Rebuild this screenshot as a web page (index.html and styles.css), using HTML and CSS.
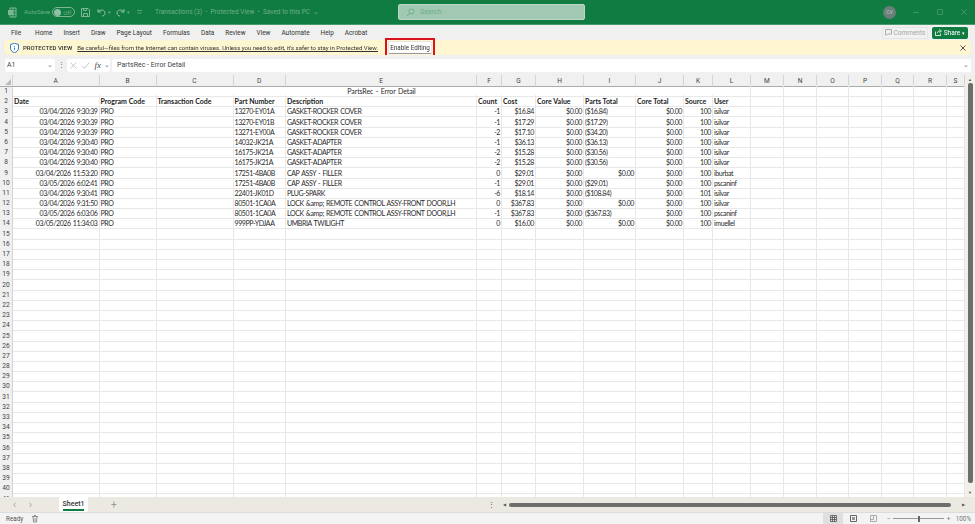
FILE: index.html
```html
<!DOCTYPE html>
<html lang="en">
<head>
    <meta charset="UTF-8">
    <meta name="viewport" content="width=device-width, initial-scale=1.0">
    <title>Transactions (3) - Protected View</title>
    <link rel="stylesheet" href="styles.css">
</head>
<body>
    <div class="app">
        <!-- Title bar -->
        <header class="titlebar">
            <div class="title-left">
                <svg class="app-icon" width="10" height="11" viewBox="0 0 10 11"><path d="M3 1h6v9H3z" fill="none" stroke="#7fb796"/><path d="M6 1v9M3 4h6M3 7h6" stroke="#7fb796"/><rect x="1" y="3" width="5" height="5" fill="#7fb796"/></svg>
                <span class="autosave">AutoSave</span>
                <span class="toggle"><span class="knob"></span>Off</span>
                <svg class="qa-save" width="9" height="9" viewBox="0 0 9 9"><path d="M.5.5h6.500l1.500 1.500v6.500h-8z M2.500 8.500v-3h4v3M2.500.5v2h3v-2" fill="none" stroke="#7fb796"/></svg>
                <svg class="qa-undo" width="9" height="9" viewBox="0 0 9 9"><path d="M1 1v3h3M1 4c2-3 7-2.500 7 1 0 2-1.500 3-3 3" fill="none" stroke="#8fc0a3"/></svg>
                <span class="caret">▾</span>
                <svg class="qa-redo" width="9" height="9" viewBox="0 0 9 9"><path d="M8 1v3h-3M8 4c-2-3-7-2.500-7 1 0 2 1.500 3 3 3" fill="none" stroke="#8fc0a3"/></svg>
                <span class="caret">▾</span>
                <svg class="qa-more" width="5" height="5" viewBox="0 0 5 5"><path d="M0 .5h5M.5 2l2 2 2-2" fill="none" stroke="#6fae88" stroke-width=".8"/></svg>
            </div>
            <div class="doc-title">Transactions (3) &nbsp;-&nbsp; Protected View &nbsp;•&nbsp; Saved to this PC &nbsp;⌄</div>
            <div class="search">
                <svg width="9" height="9" viewBox="0 0 9 9"><circle cx="5.500" cy="3.500" r="2.500" fill="none" stroke="#6fae88"/><path d="M3.700 5.300L1 8" stroke="#6fae88"/></svg>
                <span>Search</span>
            </div>
            <div class="title-right">
                <span class="avatar">CV</span>
                <span class="win-btn win-min"></span>
                <span class="win-btn win-max"></span>
                <svg class="win-close" width="6" height="6" viewBox="0 0 6 6"><path d="M0 0l6 6M6 0L0 6" stroke="#3f9565"/></svg>
            </div>
        </header>

        <!-- Ribbon tabs -->
        <nav class="ribbon">
            <a>File</a><a>Home</a><a>Insert</a><a>Draw</a><a>Page Layout</a><a>Formulas</a>
            <a>Data</a><a>Review</a><a>View</a><a>Automate</a><a>Help</a><a>Acrobat</a>
            <div class="ribbon-right">
                <button class="comments-btn">
                    <svg width="7" height="7" viewBox="0 0 7 7"><path d="M.5.500h6v4.500h-4l-1.500 1.500v-1.500h-.5z" fill="none" stroke="#aaa"/></svg>
                    Comments
                </button>
                <button class="share-btn">
                    <svg width="7" height="7" viewBox="0 0 7 7"><path d="M.5 2.500v4h5v-2M2.500 4c0-1.500 1-2 2.500-2M4.500.5l2 1.500-2 1.500" fill="none" stroke="#fff" stroke-width=".8"/></svg>
                    Share <span class="share-caret">▾</span>
                </button>
            </div>
        </nav>

        <!-- Protected view message -->
        <div class="notice">
            <svg class="shield" width="9" height="10" viewBox="0 0 9 10"><path d="M4.500.3L8.500 1.500V5C8.500 7.500 6.500 9 4.500 9.800 2.500 9 .5 7.500.5 5V1.500z" fill="#fff" stroke="#2b7cd3"/><path d="M4.500 3v.9M4.500 4.600v2.200" stroke="#2b7cd3"/></svg>
            <strong>PROTECTED VIEW</strong>
            <a class="notice-link">Be careful—files from the Internet can contain viruses. Unless you need to edit, it's safer to stay in Protected View.</a>
            <div class="highlight"><button class="enable-btn">Enable Editing</button></div>
            <svg class="notice-close" width="6" height="6" viewBox="0 0 6 6"><path d="M.5.500l5 5M5.500.500l-5 5" stroke="#555"/></svg>
        </div>

        <!-- Formula bar -->
        <div class="formula-bar">
            <div class="name-box">A1 <span class="chev">⌄</span></div>
            <span class="grip">⋮</span>
            <div class="fx-box">
                <svg width="7" height="7" viewBox="0 0 7 7"><path d="M.5.500l6 6M6.500.500l-6 6" stroke="#c4c4c4"/></svg>
                <svg width="8" height="7" viewBox="0 0 8 7"><path d="M.5 4l2 2.500L7.500.5" fill="none" stroke="#c4c4c4"/></svg>
                <em>fx</em><span class="chev">⌄</span>
            </div>
            <div class="formula-input">PartsRec - Error Detail <span class="chev">⌄</span></div>
        </div>

        <!-- Worksheet -->
        <div class="sheet-wrap">
            <div class="sheet" id="sheet"></div>
            <div class="vscroll">
                <span class="arrow">▲</span>
                <span class="vthumb"></span>
                <span class="arrow">▼</span>
            </div>
        </div>

        <!-- Sheet tabs -->
        <div class="tabbar">
            <span class="nav-arrow">‹</span>
            <span class="nav-arrow">›</span>
            <div class="sheet-tab"><span>Sheet1</span></div>
            <span class="tab-add">+</span>
            <span class="tab-dots">⋮</span>
            <div class="hscroll">
                <span class="arrow arrow-left">◀</span>
                <span class="hthumb"></span>
                <span class="arrow">▶</span>
            </div>
        </div>

        <!-- Status bar -->
        <footer class="statusbar">
            <span class="ready">Ready</span>
            <svg class="macro-icon" width="8" height="8" viewBox="0 0 8 8"><path d="M1 1.500h6M2 1.500l.5 5.500h3L6 1.500M3 .5h2M4 3v3" fill="none" stroke="#777" stroke-width=".8"/></svg>
            <div class="status-right">
                <span class="view-btn view-active">
                    <svg width="7" height="7" viewBox="0 0 7 7"><path d="M.5.500h6v6h-6zM.5 2.500h6M.5 4.500h6M2.500.5v6M4.500.5v6" fill="none" stroke="#555" stroke-width=".8"/></svg>
                </span>
                <span class="view-btn">
                    <svg width="7" height="7" viewBox="0 0 7 7"><path d="M.5.500h6v6h-6z" fill="none" stroke="#666"/><path d="M2 2h3v3h-3z" fill="#999"/></svg>
                </span>
                <span class="view-btn">
                    <svg width="7" height="7" viewBox="0 0 7 7"><path d="M.5.500h6v6h-6zM.5 4.500h3v-4" fill="none" stroke="#aaa"/></svg>
                </span>
                <span class="zoom-sign zoom-minus">−</span>
                <span class="slider"><span class="slider-thumb"></span></span>
                <span class="zoom-sign">+</span>
                <span class="zoom-pct">100%</span>
            </div>
        </footer>
    </div>

    <script src="script.js"></script>
</body>
</html>
```

FILE: styles.css
```css
* {
    box-sizing: border-box;
}

body {
    margin: 0;
    padding: 0;
    overflow: hidden;
    font-family: 'Roboto', sans-serif;
    font-size: 7px;
    color: #444;
    background: #f0f0f0;
}

button {
    font-family: inherit;
}

.app {
    width: 975px;
    height: 524px;
    display: flex;
    flex-direction: column;
    overflow: hidden;
    filter: blur(0.4px);
}

/* Title bar */
.titlebar {
    height: 25px;
    flex: none;
    background: #107c41;
    display: flex;
    align-items: center;
    color: #6fae88;
    font-size: 6.5px;
    border-bottom: 1px solid #4a9a6c;
}

.title-left {
    width: 155px;
    flex: none;
    display: flex;
    align-items: center;
    padding-left: 7px;
}

.autosave {
    margin-left: 7px;
    font-size: 6.2px;
}

.toggle {
    width: 23px;
    height: 10px;
    margin-left: 2px;
    border: 1px solid #7fb796;
    border-radius: 5px;
    display: flex;
    align-items: center;
    gap: 2px;
    padding-left: 1px;
    font-size: 6px;
}

.knob {
    width: 7px;
    height: 7px;
    border-radius: 50%;
    background: #8fc0a3;
}

.qa-save {
    margin-left: 6px;
}

.qa-undo {
    margin-left: 7px;
}

.qa-redo {
    margin-left: 5px;
}

.caret {
    margin-left: 2px;
    font-size: 5px;
}

.qa-more {
    margin-left: 7px;
}

.doc-title {
    width: 243px;
    flex: none;
    white-space: nowrap;
}

.search {
    width: 187px;
    height: 16px;
    flex: none;
    background: #a0c8b2;
    border: 1px solid #b9d8c6;
    border-radius: 2px;
    display: flex;
    align-items: center;
    gap: 5px;
    padding-left: 7px;
    font-size: 7px;
    color: #6fae88;
}

.title-right {
    flex: 1;
    display: flex;
    align-items: center;
    padding-left: 298px;
}

.avatar {
    width: 13px;
    height: 13px;
    border-radius: 50%;
    background: #6a7f78;
    color: #c4d0cb;
    font-size: 5px;
    display: flex;
    align-items: center;
    justify-content: center;
}

.win-btn {
    display: block;
}

.win-min {
    width: 6px;
    height: 1px;
    margin-left: 17px;
    background: #3f9565;
}

.win-max {
    width: 6px;
    height: 6px;
    margin-left: 18px;
    border: 1px solid #3f9565;
    border-radius: 1px;
}

.win-close {
    margin-left: 18px;
}

/* Ribbon */
.ribbon {
    height: 15px;
    flex: none;
    display: flex;
    align-items: center;
    gap: 11px;
    padding-left: 11px;
    padding-right: 7px;
    background: #f0f0f0;
    color: #333;
    font-size: 6.45px;
}

.ribbon a:first-child {
    margin-right: 3px;
}

.ribbon-right {
    margin-left: auto;
    display: flex;
    gap: 4px;
    align-items: center;
}

.comments-btn {
    width: 46px;
    height: 12px;
    padding: 0;
    border: 1px solid #e6e6e6;
    border-radius: 2px;
    background: #f2f2f2;
    color: #a5a5a5;
    font-size: 6.5px;
    display: flex;
    align-items: center;
    justify-content: center;
    gap: 2px;
}

.share-btn {
    width: 36px;
    height: 12px;
    padding: 0;
    border: none;
    border-radius: 2px;
    background: #107c41;
    color: #fff;
    font-size: 6.5px;
    display: flex;
    align-items: center;
    justify-content: center;
    gap: 2px;
}

.share-caret {
    font-size: 5px;
}

/* Protected view */
.notice {
    height: 15px;
    flex: none;
    margin: 0 4px;
    background: #fdf6d0;
    border-radius: 3px;
    box-shadow: 0 1px 1px #d8d8d8;
    display: flex;
    align-items: center;
    padding-left: 6px;
    padding-right: 5px;
    color: #333;
    font-size: 6px;
}

.shield {
    flex: none;
}

.notice strong {
    margin-left: 4px;
    font-weight: 500;
    white-space: nowrap;
}

.notice-link {
    margin-left: 5px;
    text-decoration: underline;
    white-space: nowrap;
}

.highlight {
    margin-left: 7px;
    width: 50px;
    height: 19px;
    flex: none;
    border: 2px solid #d8131b;
    display: flex;
    align-items: center;
    justify-content: center;
}

.enable-btn {
    width: 44px;
    height: 13px;
    padding: 0;
    background: #fff;
    border: 1px solid #e4e4e4;
    border-bottom-color: #999;
    border-radius: 2px;
    color: #333;
    font-size: 6.3px;
    white-space: nowrap;
}

.notice-close {
    margin-left: auto;
}

/* Formula bar */
.formula-bar {
    height: 20px;
    flex: none;
    display: flex;
    align-items: center;
    padding: 0 4px 0 5px;
    background: #f0f0f0;
    color: #444;
    font-size: 7px;
}

.name-box {
    width: 50px;
    height: 13px;
    background: #fff;
    border-radius: 2px;
    display: flex;
    align-items: center;
    justify-content: space-between;
    padding: 0 2px;
}

.grip {
    width: 12px;
    text-align: center;
    color: #666;
}

.fx-box {
    width: 43px;
    height: 13px;
    background: #fff;
    border-radius: 2px;
    display: flex;
    align-items: center;
    gap: 5px;
    padding-left: 3px;
}

.fx-box em {
    color: #444;
    font-family: 'Liberation Serif', serif;
    font-size: 9px;
}

.fx-box .chev {
    margin-left: -2px;
}

.formula-input {
    flex: 1;
    height: 13px;
    margin-left: 2px;
    background: #fff;
    border-radius: 2px;
    display: flex;
    align-items: center;
    justify-content: space-between;
    padding: 0 2px 0 5px;
}

.chev {
    color: #777;
    font-size: 7px;
    line-height: 7px;
}

/* Worksheet */
.sheet-wrap {
    height: 422px;
    flex: none;
    display: flex;
    overflow: hidden;
    background: #fff;
}

.sheet {
    width: 965px;
    flex: none;
    overflow: hidden;
    font-family: 'Lato', sans-serif;
    font-size: 7px;
    color: #2a2a2a;
}

.sheet-row {
    display: grid;
    grid-template-columns: 13px 86.5px 57px 77px 52.5px 191px 25px 34px 48px 52px 48px 29px 38px 33px 33px 32px 33px 32px 33px 18px;
    height: 10.2px;
}

.sheet-row > div {
    border-right: 1px solid #e8e8e8;
    border-bottom: 1px solid #e8e8e8;
    padding: 1px 1px 0;
    line-height: 10px;
    letter-spacing: -0.4px;
    word-spacing: 0.8px;
    white-space: nowrap;
}

.sheet-row > .head {
    background: #f0f0f0;
    border-right-color: #d4d4d4;
    border-bottom-color: #d4d4d4;
    color: #444;
    text-align: center;
    letter-spacing: 0;
    font-family: 'Roboto', sans-serif;
    font-size: 6.6px;
}

.col-heads {
    height: 10px;
}

.col-heads > div {
    border-bottom: 1px solid #ababab !important;
}

.sheet-row > .merged {
    grid-column: 2 / 14;
    text-align: center;
    letter-spacing: -0.1px;
}

.sheet-row > .bold {
    font-weight: 700;
    letter-spacing: 0;
    word-spacing: 0;
    color: #222;
}

.sheet-row > .num {
    text-align: right;
}

.corner {
    position: relative;
}

.corner::after {
    content: "";
    position: absolute;
    right: 1px;
    bottom: 1px;
    border-left: 6px solid transparent;
    border-bottom: 6px solid #bbb;
}

.vscroll {
    flex: 1;
    background: #f1efe8;
    display: flex;
    flex-direction: column;
    align-items: center;
}

.vscroll .arrow {
    height: 9px;
    font-size: 4px;
    line-height: 9px;
    color: #555;
}

.vthumb {
    width: 5px;
    flex: 1;
    background: #6e6e6e;
    border-radius: 2px;
    margin-top: -1px;
    margin-bottom: 5px;
}

/* Sheet tabs */
.tabbar {
    height: 16px;
    flex: none;
    background: #ebe9e1;
    display: flex;
    align-items: center;
    padding-left: 13px;
    color: #999;
    border-bottom: 1px solid #dcdcdc;
}

.nav-arrow {
    width: 16px;
    font-size: 10px;
    line-height: 10px;
    color: #a5a5a5;
}

.sheet-tab {
    width: 29px;
    height: 15px;
    margin-left: 14px;
    margin-top: -1px;
    padding-top: 2px;
    background: #fff;
    border-radius: 0 0 2px 2px;
    text-align: center;
    line-height: 10px;
    font-weight: 500;
    color: #333;
}

.sheet-tab span {
    display: inline-block;
    border-bottom: 1px solid #107c41;
    box-shadow: 0 1px 0 #107c41;
}

.tab-add {
    margin-left: 23px;
    font-size: 10px;
    line-height: 10px;
}

.tab-dots {
    margin-left: 371px;
    color: #555;
}

.hscroll {
    width: 470px;
    margin-left: 8px;
    display: flex;
    align-items: center;
    color: #555;
}

.hscroll .arrow {
    font-size: 4px;
}

.arrow-left {
    width: 6px;
}

.hthumb {
    width: 442px;
    height: 4px;
    background: #6e6e6e;
    border-radius: 2px;
    margin-right: 11px;
}

/* Status bar */
.statusbar {
    flex: 1;
    background: #f3f3f3;
    display: flex;
    align-items: center;
    padding-left: 6px;
    color: #555;
    font-size: 6.3px;
}

.macro-icon {
    margin-left: 8px;
}

.status-right {
    margin-left: auto;
    height: 100%;
    display: flex;
    align-items: center;
    padding-right: 4px;
}

.view-btn {
    width: 20px;
    height: 100%;
    flex: none;
    display: flex;
    align-items: center;
    justify-content: center;
}

.view-active {
    background: #dfdfdf;
}

.zoom-sign {
    width: 7px;
    margin-left: 1px;
    text-align: center;
    color: #777;
}

.zoom-minus {
    margin-left: 2px;
    margin-right: 1px;
}

.slider {
    width: 51px;
    height: 1px;
    background: #999;
    display: flex;
    justify-content: center;
    align-items: center;
}

.slider-thumb {
    width: 2px;
    height: 6px;
    background: #666;
}

.zoom-pct {
    width: 19px;
    text-align: right;
    color: #777;
}
```

FILE: script.js
```js
// Column letters and the rows that hold data; everything below row 14 is empty
var columns = ["A", "B", "C", "D", "E", "F", "G", "H", "I", "J", "K", "L", "M", "N", "O", "P", "Q", "R", "S"];
var numeric = [0, 5, 6, 7, 9, 10];

var headers = ["Date", "Program Code", "Transaction Code", "Part Number", "Description", "Count", "Cost", "Core Value", "Parts Total", "Core Total", "Source", "User"];

var data = [
    ["03/04/2026 9:30:39", "PRO", "", "13270-EY01A", "GASKET-ROCKER COVER", "-1", "$16.84", "$0.00", "($16.84)", "$0.00", "100", "isilvar"],
    ["03/04/2026 9:30:39", "PRO", "", "13270-EY01B", "GASKET-ROCKER COVER", "-1", "$17.29", "$0.00", "($17.29)", "$0.00", "100", "isilvar"],
    ["03/04/2026 9:30:39", "PRO", "", "13271-EY00A", "GASKET-ROCKER COVER", "-2", "$17.10", "$0.00", "($34.20)", "$0.00", "100", "isilvar"],
    ["03/04/2026 9:30:40", "PRO", "", "14032-JK21A", "GASKET-ADAPTER", "-1", "$36.13", "$0.00", "($36.13)", "$0.00", "100", "isilvar"],
    ["03/04/2026 9:30:40", "PRO", "", "16175-JK21A", "GASKET-ADAPTER", "-2", "$15.28", "$0.00", "($30.56)", "$0.00", "100", "isilvar"],
    ["03/04/2026 9:30:40", "PRO", "", "16175-JK21A", "GASKET-ADAPTER", "-2", "$15.28", "$0.00", "($30.56)", "$0.00", "100", "isilvar"],
    ["03/04/2026 11:53:20", "PRO", "", "17251-4BA0B", "CAP ASSY - FILLER", "0", "$29.01", "$0.00", "$0.00", "$0.00", "100", "iburbat"],
    ["03/05/2026 6:02:41", "PRO", "", "17251-4BA0B", "CAP ASSY - FILLER", "-1", "$29.01", "$0.00", "($29.01)", "$0.00", "100", "pscaninf"],
    ["03/04/2026 9:30:41", "PRO", "", "22401-JK01D", "PLUG-SPARK", "-6", "$18.14", "$0.00", "($108.84)", "$0.00", "101", "isilvar"],
    ["03/04/2026 9:31:50", "PRO", "", "80501-1CA0A", "LOCK &amp; REMOTE CONTROL ASSY-FRONT DOOR,LH", "0", "$367.83", "$0.00", "$0.00", "$0.00", "100", "isilvar"],
    ["03/05/2026 6:03:06", "PRO", "", "80501-1CA0A", "LOCK &amp; REMOTE CONTROL ASSY-FRONT DOOR,LH", "-1", "$367.83", "$0.00", "($367.83)", "$0.00", "100", "pscaninf"],
    ["03/05/2026 11:34:03", "PRO", "", "999PP-YDJAA", "UMBRIA TWILIGHT", "0", "$16.00", "$0.00", "$0.00", "$0.00", "100", "imuellel"]
];

var sheet = document.getElementById("sheet");

function addCell(row, text, className) {
    var cell = document.createElement("div");
    cell.textContent = text;
    if (className) cell.className = className;
    row.appendChild(cell);
    return cell;
}

function addRow(className) {
    var row = document.createElement("div");
    row.className = className ? "sheet-row " + className : "sheet-row";
    sheet.appendChild(row);
    return row;
}

var headRow = addRow("col-heads");
addCell(headRow, "", "head corner");
columns.forEach(function(letter) {
    addCell(headRow, letter, "head");
});

for (var r = 1; r <= 41; r++) {
    var row = addRow();
    addCell(row, r, "head");

    if (r === 1) {
        addCell(row, "PartsRec - Error Detail", "merged");
    }

    var start = r === 1 ? 12 : 0;
    for (var c = start; c < columns.length; c++) {
        var text = "";
        var className = "";
        if (r === 2) {
            text = headers[c] || "";
            className = "bold";
        } else if (r >= 3 && r <= 14) {
            var values = data[r - 3];
            text = values[c] || "";
            // Parts Total is only right aligned when it is a plain $0.00
            if (numeric.indexOf(c) !== -1 || (c === 8 && text === "$0.00")) className = "num";
        }
        addCell(row, text, className);
    }
}
```
